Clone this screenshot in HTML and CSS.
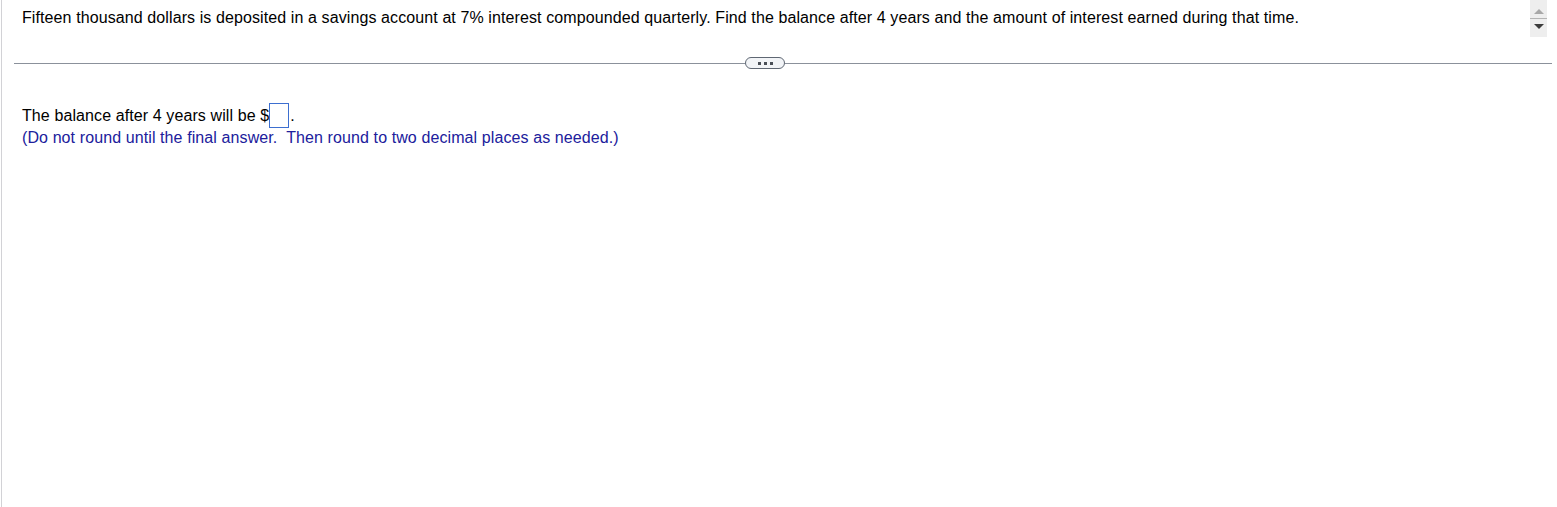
FILE: index.html
```html
<!DOCTYPE html>
<html lang="en">
<head>
<meta charset="utf-8">
<title>Question</title>
<link rel="stylesheet" href="styles.css">
</head>
<body>
<div class="page">
  <div class="question">
    <p class="question-text">Fifteen thousand dollars is deposited in a savings account at 7% interest compounded quarterly. Find the balance after 4 years and the amount of interest earned during that time.</p>
    <div class="stepper">
      <span class="arrow arrow-up"></span>
      <span class="stepper-sep"></span>
      <span class="arrow arrow-down"></span>
    </div>
  </div>
  <div class="divider">
    <span class="rule rule-left"></span>
    <span class="pill"><i></i><i></i><i></i></span>
    <span class="rule rule-right"></span>
  </div>
  <div class="answer">
    <div class="answer-line">The balance after 4 years will be $<span class="answer-box"></span>.</div>
    <div class="answer-hint">(Do not round until the final answer.&nbsp; Then round to two decimal places as needed.)</div>
  </div>
</div>
</body>
</html>
```
FILE: styles.css
```css
html, body {
  margin: 0;
  padding: 0;
  background: #ffffff;
}
body {
  font-family: "Liberation Sans", Arial, sans-serif;
  font-size: 16px;
  letter-spacing: 0.1px;
  color: #000000;
}
.page {
  margin-left: 1px;
  border-left: 1px solid #d2d2d6;
  min-height: 507px;
  box-sizing: border-box;
}
.question {
  display: flex;
  align-items: flex-start;
  height: 37px;
}
.question-text {
  flex: 1;
  margin: 0;
  padding: 8px 0 0 20px;
  line-height: 20px;
}
.stepper {
  width: 17px;
  height: 37px;
  margin-right: 10px;
  background: #eeeeee;
  display: flex;
  flex-direction: column;
  align-items: center;
  padding-top: 9px;
  box-sizing: border-box;
}
.arrow {
  width: 0;
  height: 0;
  border-left: 5px solid transparent;
  border-right: 5px solid transparent;
}
.arrow-up {
  border-bottom: 5px solid #a8a8a8;
}
.arrow-down {
  border-top: 5px solid #3c3c3c;
}
.stepper-sep {
  width: 17px;
  height: 1px;
  background: #b4b4b4;
  margin: 4px 0 5px;
}
.divider {
  display: flex;
  align-items: center;
  height: 12px;
  margin: 20px 5px 0 12px;
}
.rule {
  height: 1px;
  background: #8b919b;
}
.rule-left {
  width: 731px;
}
.rule-right {
  flex: 1;
}
.pill {
  width: 40px;
  height: 12px;
  box-sizing: border-box;
  border: 1px solid #5f6773;
  border-radius: 6px;
  background: #f2f4f7;
  display: flex;
  align-items: center;
  justify-content: center;
  gap: 3px;
}
.pill i {
  width: 3px;
  height: 3px;
  background: #4a4f57;
}
.answer {
  margin-top: 34px;
  padding-left: 20px;
  line-height: 22px;
}
.answer-line {
  height: 24px;
}
.answer-box {
  display: inline-block;
  width: 20px;
  height: 25px;
  box-sizing: border-box;
  border: 1px solid #3d6fd0;
  vertical-align: -7px;
  margin: 0 1px 0 0;
}
.answer-hint {
  color: #20209c;
}
```
